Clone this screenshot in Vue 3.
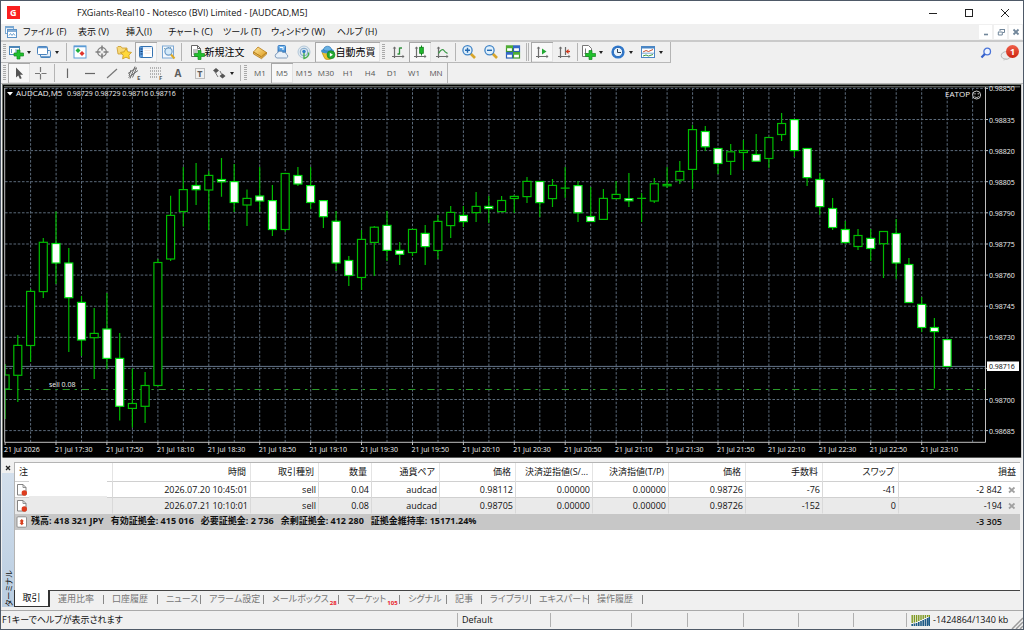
<script setup>
const menus = [
  { label: 'ファイル (F)', size: 'm' },
  { label: '表示 (V)', size: 's' },
  { label: '挿入(I)', size: 'xs' },
  { label: 'チャート (C)', size: 'm' },
  { label: 'ツール (T)', size: 's' },
  { label: 'ウィンドウ (W)', size: 'l' },
  { label: 'ヘルプ (H)', size: 'm' }
]

const mainTools = [
  { kind: 'grip' },
  { icon: 'new-chart', name: '新規チャート', drop: true },
  { icon: 'profiles', name: 'プロファイル', drop: true },
  { kind: 'sep' },
  { icon: 'market', name: '気配値表示' },
  { icon: 'target', name: 'データウィンドウ' },
  { icon: 'navigator', name: 'ナビゲーター' },
  { icon: 'terminal', name: 'ターミナル', on: true },
  { icon: 'tester', name: 'ストラテジーテスター' },
  { kind: 'sep' },
  { icon: 'order', name: '新規注文', text: '新規注文' },
  { icon: 'book', name: 'メタエディター' },
  { icon: 'cloud', name: '仮想ホスティング' },
  { icon: 'signal', name: 'シグナル' },
  { icon: 'auto', name: '自動売買', text: '自動売買', on: true },
  { kind: 'grip' },
  { icon: 'bars', name: 'バーチャート' },
  { icon: 'candles', name: 'ローソク足', on: true },
  { icon: 'line', name: 'ラインチャート' },
  { kind: 'sep' },
  { icon: 'zoom-in', name: '拡大' },
  { icon: 'zoom-out', name: '縮小' },
  { icon: 'tiles', name: '整列' },
  { kind: 'sep double' },
  { icon: 'scroll', name: '自動スクロール', on: true },
  { icon: 'shift', name: 'チャートシフト' },
  { kind: 'sep' },
  { icon: 'indicators', name: 'インディケータ', drop: true, roomy: true },
  { icon: 'clock', name: '時間足設定', drop: true, roomy: true },
  { icon: 'template', name: '定型チャート', drop: true, roomy: true }
]

const drawTools = [
  { kind: 'grip' },
  { icon: 'cursor', name: 'カーソル', on: true },
  { icon: 'cross', name: 'クロスヘア' },
  { kind: 'sep' },
  { icon: 'vline', name: '垂直線' },
  { icon: 'hline', name: '水平線' },
  { icon: 'trend', name: 'トレンドライン' },
  { icon: 'channel', name: 'チャネル', letter: 'E', x: 11, y: 15, size: 6 },
  { icon: 'fibo', name: 'フィボナッチ', letter: 'F', x: 11, y: 15, size: 6 },
  { icon: 'blank', name: 'テキスト', letter: 'A', x: 4.5, y: 12, size: 10 },
  { icon: 'label', name: 'ラベル', letter: 'T', x: 5.3, y: 12, size: 9 },
  { icon: 'arrows', name: '矢印', drop: true }
]

const frames = ['M1', 'M5', 'M15', 'M30', 'H1', 'H4', 'D1', 'W1', 'MN']

/* high, body top, body bottom, low, 1 = falling candle */
const raw = [
  [364, 375, 389, 419, 0], [335, 345.4, 375.3, 402, 0], [289, 291.4, 345.5, 362, 0], [238, 242.3, 291.6, 298, 0],
  [211.5, 243.5, 263, 284, 1], [248, 263, 297.7, 352, 1], [296, 302.4, 340, 356, 1], [308, 333.4, 337.7, 379, 0],
  [293, 329, 358.4, 369, 1], [333, 358.4, 406.3, 420.5, 1], [368.5, 403.5, 408.4, 427.5, 0], [372, 385.5, 406.3, 423, 0],
  [259, 262.5, 385.5, 386, 0], [195.7, 215.4, 259, 261, 0], [167, 189.6, 211.5, 226.5, 0], [163, 185.5, 189.7, 205, 1],
  [171, 175.4, 190, 230, 0], [158, 179.5, 181.8, 196.7, 1], [164, 181.6, 202.5, 212, 1], [189.5, 198.4, 205, 226, 0],
  [167, 196, 201, 212, 1], [185, 200.6, 229.5, 236, 1], [173, 173.5, 229.5, 232, 0], [167, 175.5, 184, 186, 1],
  [167, 185.6, 202.5, 209, 1], [200, 200.6, 216.7, 228, 1], [211, 221.3, 263, 271, 1], [256, 260.5, 275.5, 286, 1],
  [230, 239.4, 277.5, 290, 0], [226, 227.2, 242.4, 276, 0], [211, 225.4, 250.4, 261, 1], [242, 250.4, 254.3, 265, 1],
  [229, 229.4, 252.5, 256, 0], [225, 233.4, 246.6, 265, 1], [215, 221.4, 250.5, 259, 0], [206, 212.4, 225.6, 238, 0],
  [206, 215.4, 221.6, 227, 1], [192, 206.4, 212.6, 222, 0], [196, 206.4, 208.6, 223, 1], [196, 200.5, 211.6, 212, 0],
  [195, 196.4, 198.5, 213, 0], [177, 181.4, 196.6, 203, 0], [181, 181.5, 202.6, 217, 1], [179, 185.4, 198.6, 207, 0],
  [167, 188.2, 188.2, 198, 0], [181, 185.6, 212.8, 222, 1], [187, 216.5, 221.5, 222, 1], [189, 198.4, 219.4, 220, 0],
  [181, 194.4, 198.6, 199, 0], [173, 198.6, 200.8, 207, 1], [193, 198.4, 198.4, 222, 0], [178, 183.8, 201, 203, 0],
  [167, 184.4, 185.8, 188, 0], [161, 171.4, 180, 184, 0], [125, 129.6, 169.4, 189, 0], [126, 131.5, 146.8, 151, 1],
  [148, 148.5, 163.5, 174, 1], [144, 151.8, 161.4, 175, 0], [140, 150.5, 152.5, 170, 0], [134, 154.5, 161.2, 161, 1],
  [137, 137.5, 158.5, 168, 0], [113, 123.5, 134.5, 141, 0], [119, 119.6, 150.6, 157, 1], [148, 148.5, 177.6, 186, 1],
  [173, 179.5, 206.6, 215, 1], [198, 208.5, 227.5, 230, 1], [221, 229.5, 242.5, 244, 1], [229, 235.5, 246.5, 250, 0],
  [229, 238.4, 248.5, 261, 1], [231, 231.5, 243.7, 278, 0], [219, 233.5, 263, 279, 1], [258, 264.5, 302.5, 303, 1],
  [297, 304.4, 327.5, 332, 1], [318, 327.5, 331.6, 388.5, 1], [339, 339.6, 366.5, 367, 1]
]
const candles = raw.map(([high, top, bottom, low, down], i) => ({
  x: +(5.1 + 12.73 * i).toFixed(1), high, top, h: bottom - top, bottom, low, down
}))

const gridX = Array.from({ length: 38 }, (_, i) => +(30.6 + 25.46 * i).toFixed(1))
const prices = Array.from({ length: 12 }, (_, i) => ({
  y: +(88.4 + 31.11 * i).toFixed(1),
  label: (0.9885 - 0.00015 * i).toFixed(5)
}))
const times = Array.from({ length: 19 }, (_, i) => {
  const min = 17 * 60 + 10 + 20 * i
  const clock = Math.floor(min / 60) + ':' + String(min % 60).padStart(2, '0')
  return { x: +(5.1 + 50.92 * i).toFixed(1), label: '21 Jul ' + (i ? clock : '2026') }
})

const heads = ['注', '時間', '取引種別', '数量', '通貨ペア', '価格', '決済逆指値(S/...', '決済指値(T/P)', '価格', '手数料', 'スワップ', '損益']
const rows = [
  ['2026.07.20 10:45:01', 'sell', '0.04', 'audcad', '0.98112', '0.00000', '0.00000', '0.98726', '-76', '-41', '-2 842'],
  ['2026.07.21 10:10:01', 'sell', '0.08', 'audcad', '0.98705', '0.00000', '0.00000', '0.98726', '-152', '0', '-194']
]
const summary = ['残高: 418 321 JPY', '有効証拠金: 415 016', '必要証拠金: 2 736', '余剰証拠金: 412 280', '証拠金維持率: 15171.24%']

const tabs = [
  { t: '運用比率', w: 54 }, { t: '口座履歴', w: 54 }, { t: 'ニュース', w: 43 }, { t: 'アラーム設定', w: 63 },
  { t: 'メールボックス', n: '28', w: 75 }, { t: 'マーケット', n: '105', w: 61 }, { t: 'シグナル', w: 47 }, { t: '記事', w: 35 },
  { t: 'ライブラリ', w: 49 }, { t: 'エキスパート', w: 58 }, { t: '操作履歴', w: 54 }
]
</script>

<template>
  <div class="window">
    <svg class="defs" aria-hidden="true">
      <defs>
        <linearGradient id="gold" x1="0" y1="0" x2="1" y2="1"><stop offset="0" stop-color="#ffe9a0" /><stop offset="1" stop-color="#dd9a1c" /></linearGradient>
        <linearGradient id="sky" x1="0" y1="0" x2="0" y2="1"><stop offset="0" stop-color="#8cc8f6" /><stop offset="1" stop-color="#2474c4" /></linearGradient>
        <linearGradient id="ball" x1="0" y1="0" x2="0" y2="1"><stop offset="0" stop-color="#f0604a" /><stop offset="1" stop-color="#cc2410" /></linearGradient>
      </defs>
      <symbol id="new-chart" viewBox="0 0 16 16">
        <rect x="1.500" y="2.500" width="10" height="8" fill="#fff" stroke="#4d86b8" /><path d="M2 3.500h9" stroke="#4d86b8" /><path d="M3.500 5v4M8 5v4" stroke="#6b9dc8" />
        <path d="M9 6h3v3h3.500v3H12v3H9v-3H6V9h3z" fill="#20c02c" stroke="#128a1c" stroke-width=".7" />
      </symbol>
      <symbol id="profiles" viewBox="0 0 16 16">
        <rect x="4.500" y="6.500" width="10" height="7" rx="1" fill="#e7f1fb" stroke="#4a83bd" /><rect x="1.500" y="2.500" width="10" height="8" rx="1" fill="#fff" stroke="#4a83bd" /><path d="M2 3.500h9" stroke="#5b93cc" stroke-width="1.500" /><path d="M5 13h9" stroke="#4a83bd" stroke-width="1.500" />
      </symbol>
      <symbol id="market" viewBox="0 0 16 16">
        <rect x="2" y="2" width="12" height="12" fill="#fff" stroke="#5b9bd5" /><path d="M2 2.500h12" stroke="#5b9bd5" stroke-width="1.500" />
        <path d="M6 4l2.500 2.500L6 9 3.500 6.500z" fill="#20b040" /><path d="M10 7l2.500 2.500L10 12 7.500 9.500z" fill="#e0342a" />
      </symbol>
      <symbol id="target" viewBox="0 0 16 16">
        <circle cx="8" cy="8" r="4.300" fill="none" stroke="#808080" stroke-width="1.300" /><path d="M8 1.500v5M8 9.500v5M1.500 8h5M9.500 8h5" stroke="#808080" stroke-width="1.600" />
      </symbol>
      <symbol id="navigator" viewBox="0 0 16 16">
        <path d="M1 3.500l1-1h3l1 1.500h5V10H2z" fill="#f7d978" stroke="#c9992c" stroke-width=".8" /><path d="M10 4.500l1.800 3.300 3.700.6-2.600 2.700.5 3.700-3.400-1.600-3.400 1.600.6-3.700L4.500 8.400l3.700-.6z" fill="#ffd83a" stroke="#c9951a" stroke-width=".8" />
      </symbol>
      <symbol id="terminal" viewBox="0 0 16 16">
        <rect x="1.500" y="2.500" width="13" height="11" rx="1" fill="#fff" stroke="#3572b0" /><rect x="2" y="3" width="3" height="10" fill="#5c9ada" /><path d="M2.500 5h2M2.500 7.500h2M2.500 10h2" stroke="#173f74" /><path d="M5 4h9" stroke="#cfe1f5" /><path d="M6.500 6.500h6M6.500 9h6" stroke="#f3e6e0" />
      </symbol>
      <symbol id="tester" viewBox="0 0 16 16">
        <rect x="2.500" y="2" width="11" height="12" fill="#f4f8fd" stroke="#7aa7d4" /><path d="M4 4.500h2v6M8 3.500h4" stroke="#8aa" fill="none" stroke-dasharray="1 1" /><circle cx="8.500" cy="7.500" r="3.600" fill="#d4eafa" stroke="#6d9cc8" stroke-width="1.200" /><path d="M11 10.500l3.500 4" stroke="#dca928" stroke-width="2" />
      </symbol>
      <symbol id="order" viewBox="0 0 16 16">
        <path d="M2.500 1.500h6l3 3v8h-9z" fill="#fff" stroke="#666" /><path d="M8.500 1.500v3h3" fill="none" stroke="#666" /><path d="M4 6h5M4 8h4M4 10h3" stroke="#888" /><path d="M9 6.500h3v3h3.500v3H12v3H9v-3H5.500v-3H9z" fill="#20c02c" stroke="#128a1c" stroke-width=".7" />
      </symbol>
      <symbol id="book" viewBox="0 0 16 16">
        <path d="M6 3l8.500 5.500-5 4.500L1.500 8z" fill="url(#gold)" stroke="#b67a14" stroke-width=".8" /><path d="M1.500 8v2l8 4.700 5-4.500V8.500L9.500 13z" fill="#e9bb55" stroke="#a86f10" stroke-width=".7" />
      </symbol>
      <symbol id="cloud" viewBox="0 0 16 16">
        <rect x="4" y="1.500" width="7.500" height="8" rx="1" fill="url(#sky)" stroke="#1d66b4" stroke-width=".8" /><path d="M6 3.500h3v2.500" stroke="#fff" fill="none" /><path d="M3 14a2.300 2.300 0 010-4.500 3.500 3.500 0 016-1 2.500 2.500 0 013.500 1.800A2 2 0 0112.500 14z" fill="#e8f0f8" stroke="#6789ae" stroke-width=".8" />
      </symbol>
      <symbol id="signal" viewBox="0 0 16 16">
        <circle cx="8" cy="8" r="6" fill="#dfe9f1" stroke="#b3c7d8" /><circle cx="8" cy="8" r="3.800" fill="none" stroke="#7fa6c8" /><path d="M8 8v6.500c3-.5 5-3 4.500-6" stroke="#48b04c" stroke-width="1.400" fill="none" /><circle cx="8" cy="7.500" r="1.700" fill="#2f7ec4" />
      </symbol>
      <symbol id="auto" viewBox="0 0 16 16">
        <path d="M2 8.500h10V12a4 3 0 01-8 1z" fill="#efc12e" stroke="#b58c10" stroke-width=".7" /><ellipse cx="7.500" cy="7" rx="6.500" ry="2.500" fill="#4192cf" /><path d="M3.500 6c0-5 8-5 8 0-2 1.300-6 1.300-8 0z" fill="#69b1e2" stroke="#2a76b4" stroke-width=".7" /><circle cx="11" cy="10.800" r="4" fill="#24a832" stroke="#15801f" stroke-width=".6" /><path d="M9.800 8.800l3.200 2-3.200 2z" fill="#fff" />
      </symbol>
      <symbol id="axes" viewBox="0 0 16 16">
        <path d="M4.500 3v11M2 12.500h12" stroke="#6c6c6c" stroke-width="1.200" fill="none" /><path d="M2.700 4.500l1.800-2 1.800 2zM12.500 10.700l2 1.800-2 1.800z" fill="#6c6c6c" />
      </symbol>
      <symbol id="bars" viewBox="0 0 16 16"><use href="#axes" /><path d="M9.500 3.500v7M9.500 4H12M7.500 10h2" stroke="#2f8f3c" stroke-width="1.300" fill="none" /></symbol>
      <symbol id="candles" viewBox="0 0 16 16"><use href="#axes" /><path d="M9.500 1.500v10" stroke="#128a1c" /><rect x="7.700" y="3.300" width="3.600" height="6" fill="#1fb82c" stroke="#0d7c18" stroke-width=".8" /></symbol>
      <symbol id="line" viewBox="0 0 16 16"><use href="#axes" /><path d="M4.500 9.500C7 5 9 5 10 6.500s2 2 3.500 3" stroke="#3a9a46" stroke-width="1.200" fill="none" /></symbol>
      <symbol id="zoom-in" viewBox="0 0 16 16"><path d="M9.500 9.500l4.500 4.500" stroke="#d8a62c" stroke-width="2.600" /><circle cx="6.500" cy="6.200" r="4.600" fill="#dff0fc" stroke="#3f83c6" stroke-width="1.300" /><path d="M6.500 3.800v5M4 6.300h5" stroke="#2468b0" stroke-width="1.400" /></symbol>
      <symbol id="zoom-out" viewBox="0 0 16 16"><path d="M9.500 9.500l4.500 4.500" stroke="#d8a62c" stroke-width="2.600" /><circle cx="6.500" cy="6.200" r="4.600" fill="#dff0fc" stroke="#3f83c6" stroke-width="1.300" /><path d="M4 6.300h5" stroke="#2468b0" stroke-width="1.400" /></symbol>
      <symbol id="tiles" viewBox="0 0 16 16"><g stroke-width="1.200"><rect x="1.500" y="2" width="6" height="5.500" fill="#fff" stroke="#3f9a2b" /><rect x="8.500" y="2" width="6" height="5.500" fill="#fff" stroke="#2c5fb4" /><rect x="1.500" y="8.500" width="6" height="5.500" fill="#fff" stroke="#2c5fb4" /><rect x="8.500" y="8.500" width="6" height="5.500" fill="#fff" stroke="#3f9a2b" /></g><g stroke-width="2.400"><path d="M1 3h7M8 9.500h7" stroke="#4fae34" /><path d="M8 3h7M1 9.500h7" stroke="#3568c8" /></g></symbol>
      <symbol id="scroll" viewBox="0 0 16 16"><use href="#axes" /><path d="M8 4.500l4.500 3L8 10.500z" fill="#22a832" /></symbol>
      <symbol id="shift" viewBox="0 0 16 16"><use href="#axes" /><path d="M9.500 3v8" stroke="#6c6c6c" stroke-width="1.200" /><path d="M14 7.500h-3" stroke="#cf3b1e" stroke-width="1.300" /><path d="M12.500 5l-3 2.500 3 2.500z" fill="#cf3b1e" /></symbol>
      <symbol id="indicators" viewBox="0 0 16 16">
        <path d="M2.500 1.500h6l3 3v8h-9z" fill="#fff" stroke="#777" /><path d="M5.500 4.500v5M4.500 9.500h3" stroke="#777" fill="none" /><path d="M9 6.500h3v3h3.500v3H12v3H9v-3H5.500v-3H9z" fill="#20c02c" stroke="#128a1c" stroke-width=".7" />
      </symbol>
      <symbol id="clock" viewBox="0 0 16 16"><circle cx="8" cy="8" r="6.600" fill="#2f78cc" /><circle cx="8" cy="8" r="4.600" fill="#e9f4fd" stroke="#1d5dac" stroke-width=".8" /><path d="M7.500 5v3.500H11" stroke="#345" fill="none" /></symbol>
      <symbol id="template" viewBox="0 0 16 16"><rect x="1.500" y="2.500" width="13" height="11" fill="#fff" stroke="#4a86c4" /><path d="M2 3.500h12" stroke="#4a86c4" stroke-width="2" /><path d="M3 8l3-1.500 2.500 1L13 5.500" stroke="#c8502e" fill="none" /><path d="M2 9.200h12" stroke="#7aa7d4" /><path d="M3 12l3-1 2.500 1 4.500-1.500" stroke="#3a9a46" fill="none" /></symbol>
      <symbol id="cursor" viewBox="0 0 16 16"><path d="M5 2.500v10l2.300-2.100 1.600 3.600 1.800-.8-1.600-3.500h3z" fill="#555" /></symbol>
      <symbol id="cross" viewBox="0 0 16 16"><path d="M7.500 2v5M7.500 9v5.500M2 8.500h5M8.500 8.500h5" stroke="#777" stroke-width="1.200" /></symbol>
      <symbol id="vline" viewBox="0 0 16 16"><path d="M7.500 3.500v9.500" stroke="#666" stroke-width="1.200" /></symbol>
      <symbol id="hline" viewBox="0 0 16 16"><path d="M3 8.500h10" stroke="#666" stroke-width="1.200" /></symbol>
      <symbol id="trend" viewBox="0 0 16 16"><path d="M3 13L13 4" stroke="#777" stroke-width="1.200" /></symbol>
      <symbol id="channel" viewBox="0 0 16 16"><path d="M2 8.500l8.500-6M2.500 12.500L12 5.500M4 13.500l5-12M6.500 12.500l4-9.500M3 11l2-6" stroke="#6c6c6c" fill="none" /></symbol>
      <symbol id="fibo" viewBox="0 0 16 16"><path d="M2 3h12M2 6h12M2 9h12M2 12h8" stroke="#777" stroke-dasharray="1 1" fill="none" /></symbol>
      <symbol id="blank" viewBox="0 0 16 16"></symbol>
      <symbol id="label" viewBox="0 0 16 16"><rect x="3.500" y="3.500" width="9" height="10" fill="none" stroke="#888" stroke-dasharray="1 1" /></symbol>
      <symbol id="arrows" viewBox="0 0 16 16"><path d="M2 5.500L5 3l3 2.500-3 2.500zM8.500 11l3-2.500 3 2.500-3 2.500z" fill="#555" /><path d="M4 7l3 5M9 6l1.500 3" stroke="#777" /></symbol>
      <symbol id="sheet" viewBox="0 0 12 12"><path d="M1.500.5h5.500l3 3V11H1.500z" fill="#fff" stroke="#777" stroke-width=".9" /><path d="M7 .5v3h3" fill="none" stroke="#777" stroke-width=".8" /><circle cx="8.300" cy="9" r="2.700" fill="#dd3c1e" /></symbol>
      <symbol id="balance" viewBox="0 0 12 12"><rect x="1" y=".8" width="9.500" height="10.400" rx="1" fill="#fff" stroke="#888" stroke-width=".9" /><path d="M5.800 3L8 5.300H7V7h1L5.800 9.300 3.500 7h1V5.300h-1z" fill="#d8401e" /></symbol>
    </svg>

    <header class="title">
      <svg class="logo" viewBox="0 0 13 13"><rect width="13" height="13" fill="#fb1f1f" /><text x="3" y="10" font-size="9" font-weight="700" fill="#fff">G</text></svg>
      <h1>FXGiants-Real10 - Notesco (BVI) Limited - [AUDCAD,M5]</h1>
      <div class="sys">
        <button aria-label="最小化"><svg viewBox="0 0 10 10"><path d="M1 5.500h8" /></svg></button>
        <button aria-label="最大化"><svg viewBox="0 0 10 10"><rect x="1.500" y="1.500" width="7" height="7" /></svg></button>
        <button aria-label="閉じる"><svg viewBox="0 0 10 10"><path d="M1 1l8 8M9 1L1 9" /></svg></button>
      </div>
    </header>

    <nav class="menu">
      <svg class="doc" viewBox="0 0 12 12"><rect x=".5" y=".5" width="8" height="7" fill="#fff" stroke="#7ba8d2" /><path d="M1 1.500h7" stroke="#7ba8d2" stroke-width="1.500" /><rect x="2.500" y="3.500" width="9" height="8" fill="#fff" stroke="#5d93c8" /><path d="M3 5h8" stroke="#5d93c8" stroke-width="1.500" /><path d="M4 9.500l1.500-2 1.500 2L8.500 7.500l1.500 2" fill="none" stroke="#6e9fce" /></svg>
      <button v-for="m in menus" :key="m.label" :class="m.size">{{ m.label }}</button>
      <div class="mdi">
        <button aria-label="チャートを最小化"><svg viewBox="0 0 8 8"><path d="M2 6.500h4" stroke-width="1.600" /></svg></button>
        <button aria-label="チャートを元に戻す"><svg viewBox="0 0 8 8"><path d="M3 1.500h4.500M3 1v2M7.500 1v3.500H6M1 4h4.500M1.300 4v3h4V4" /></svg></button>
        <button aria-label="チャートを閉じる"><svg viewBox="0 0 8 8"><path d="M1.500 1.500l5 5M6.500 1.500l-5 5" stroke-width="1.800" /></svg></button>
      </div>
    </nav>

    <div class="bars">
      <div class="bar main">
        <template v-for="(t, i) in mainTools" :key="i">
          <i v-if="t.kind" :class="t.kind"></i>
          <button v-else :class="{ on: t.on, drop: t.drop, roomy: t.roomy, wide: t.text }" :aria-label="t.name">
            <svg class="ic"><use :href="'#' + t.icon" /></svg><span v-if="t.text">{{ t.text }}</span><b v-if="t.drop" class="caret"></b>
          </button>
        </template>
      </div>
      <div class="bar">
        <template v-for="(t, i) in drawTools" :key="i">
          <i v-if="t.kind" :class="t.kind"></i>
          <button v-else :class="{ on: t.on, drop: t.drop }" :aria-label="t.name">
            <svg class="ic" viewBox="0 0 16 16"><use :href="'#' + t.icon" /><text v-if="t.letter" :x="t.x" :y="t.y" :font-size="t.size">{{ t.letter }}</text></svg><b v-if="t.drop" class="caret"></b>
          </button>
        </template>
        <i class="grip tall"></i>
        <button v-for="f in frames" :key="f" class="tf" :class="{ on: f === 'M5' }">{{ f }}</button>
      </div>
      <div class="extras">
        <button aria-label="検索"><svg viewBox="0 0 12 12"><circle cx="7.200" cy="4.500" r="3.300" fill="#eef4ff" stroke="#4a74d8" stroke-width="1.300" /><path d="M4.800 7L1.500 10.500" stroke="#3560cc" stroke-width="2.200" /></svg></button>
        <button class="bell" aria-label="通知 1件"><svg viewBox="0 0 20 18"><ellipse cx="6" cy="11.500" rx="4.800" ry="3.800" fill="#ececec" stroke="#aaa" stroke-width=".8" /><path d="M4 14l-.5 3 3.500-2.500z" fill="#ccc" /><circle cx="12.500" cy="7.500" r="6.500" fill="url(#ball)" /><text x="12.500" y="11" text-anchor="middle" font-size="9" font-weight="700" fill="#fff">1</text></svg></button>
      </div>
    </div>

    <svg class="chart" viewBox="1 84 1022 374" role="img" aria-label="AUDCAD M5">
      <rect x="1" y="84" width="1022" height="374" fill="#f0f0f0" />
      <rect x="2" y="84" width="1020" height="373.500" fill="#707670" />
      <rect x="3" y="85" width="1018" height="372.500" fill="#000" />
      <path d="M4 86.800H1020" stroke="#858a85" />
      <g stroke="#5c6b7b" stroke-dasharray="2.600 1.640" fill="none">
        <path v-for="x in gridX" :key="x" :d="`M${x} 88V442`" />
        <path v-for="p in prices" :key="p.y" :d="`M5 ${p.y}H985`" />
      </g>
      <path d="M5 366.400H985" stroke="#64758a" />
      <path d="M5 389.500H985" stroke="#2a9a2a" stroke-dasharray="7.200 4.800 2.400 4.800" />
      <clipPath id="plot"><rect x="4.500" y="86" width="981" height="356" /></clipPath>
      <g clip-path="url(#plot)" stroke-width="1.200">
        <g v-for="c in candles" :key="c.x" :stroke="c.down ? '#00e010' : '#00bc00'">
          <path :d="`M${c.x} ${c.high}V${c.top}M${c.x} ${c.bottom}V${c.low}`" stroke="#00b800" />
          <rect v-if="c.h > 0" :x="c.x - 4" :y="c.top" width="8" :height="c.h" :fill="c.down ? '#fff' : '#000'" />
          <path v-else :d="`M${c.x - 4.500} ${c.top}h9`" />
        </g>
      </g>
      <path d="M4.700 88V442.300H985.500V87" fill="none" stroke="#c0c0c0" />
      <g class="tick">
        <path v-for="t in times" :key="t.x" :d="`M${t.x} 442v3`" stroke="#c0c0c0" />
        <path v-for="p in prices" :key="p.y" :d="`M985 ${p.y}h3`" stroke="#c0c0c0" />
        <text v-for="t in times" :key="t.label" :x="t.x - 1" y="452">{{ t.label }}</text>
        <text v-for="p in prices" :key="p.label" x="989" :y="p.y + 3">{{ p.label }}</text>
        <rect x="987" y="361.500" width="32" height="9.500" fill="#fff" />
        <text x="989" y="369" class="now">0.98716</text>
        <path d="M7 92h6l-3 3.500z" fill="#fff" />
        <text x="16" y="96" class="big">AUDCAD,M5</text>
        <text x="67" y="96">0.98729 0.98729 0.98716 0.98716</text>
        <text x="49" y="387">sell 0.08</text>
        <text x="970" y="97" text-anchor="end" class="big">EATOP</text>
        <circle cx="976.600" cy="95" r="4" fill="none" stroke="#ddd" stroke-width=".9" />
        <path d="M974.500 96.300c1 1.600 3.200 1.600 4.200 0M975 93v1.500M978.200 93v1.500" fill="none" stroke="#ddd" stroke-width=".9" />
      </g>
      <path d="M1021.500 84V458" stroke="#c8c8c8" />
    </svg>

    <section class="term">
      <aside class="side">
        <button aria-label="ターミナルを閉じる"><svg viewBox="0 0 6 6"><path d="M1 1l4 4M5 1L1 5" stroke="#222" stroke-width="1.300" /></svg></button>
        <div class="strip"><span>ターミナル</span></div>
      </aside>
      <div class="panel">
        <div class="sheet">
          <table>
            <colgroup><col v-for="(h, i) in heads" :key="i" :class="'c' + i"></colgroup>
            <thead><tr><th v-for="(h, i) in heads" :key="i" scope="col">{{ h }}</th></tr></thead>
            <tbody>
              <tr v-for="(r, n) in rows" :key="n" :class="{ alt: n === 1 }">
                <td class="first"><svg class="mini"><use href="#sheet" /></svg><span class="blank"></span></td>
                <td v-for="(v, i) in r" :key="i">{{ v }}<button v-if="i === 10" class="close" aria-label="決済"><svg viewBox="0 0 8 8"><path d="M1 1.500l5.500 5M6.500 1.500L1 6.500" stroke="#a0a0a0" stroke-width="1.700" /></svg></button></td>
              </tr>
              <tr class="sum">
                <td colspan="11" class="first"><svg class="mini"><use href="#balance" /></svg><span v-for="s in summary" :key="s" class="seg">{{ s }}</span></td>
                <td class="total">-3 305</td>
              </tr>
            </tbody>
          </table>
        </div>
        <div class="tabs" role="tablist">
          <button class="active" role="tab" aria-selected="true">取引</button>
          <button v-for="t in tabs" :key="t.t" role="tab" :style="{ width: t.w + 'px' }">{{ t.t }}<sub v-if="t.n">{{ t.n }}</sub></button>
        </div>
      </div>
    </section>

    <footer class="status">
      <span class="help">F1キーでヘルプが表示されます</span>
      <span class="s93">Default</span>
      <span class="s81"></span><span class="s56"></span><span class="s56"></span><span class="s55"></span><span class="s55"></span><span class="s53"></span>
      <span class="net">
        <svg viewBox="0 0 19 11"><path d="M1.200 0v8M3.400 0v7.500M5.600 0v7M7.800 0v6M10 0v5M12.200 0v4M14.400 0v3M16.600 0v2M18.400 0v2" stroke="#7f9a20" stroke-width="1.400" /><path d="M1.200 9v2M3.400 8.500V11M5.600 8v3M7.800 7v4M10 6v5M12.200 5v6M14.400 4v7M16.600 3v8M18.400 2v9" stroke="#1c5a86" stroke-width="1.600" /></svg>
        -1424864/1340 kb
      </span>
      <svg class="sizer" viewBox="0 0 12 12"><path d="M12 1L1 12M12 5l-7 7M12 9l-3 3" stroke="#9a9a9a" stroke-width="1.500" /></svg>
    </footer>
  </div>
</template>

<style>
body {
  margin: 0;
  background: #f0f0f0;
}
</style>

<style scoped>
.window {
  box-sizing: border-box;
  min-height: 100vh;
  display: flex;
  flex-direction: column;
  border: 1px solid #4e5967;
  background: #f0f0f0;
  color: #111;
  font: 9px/12px "Open Sans", "Noto Sans CJK JP", sans-serif;
  font-feature-settings: "palt";
}
.defs { position: absolute; width: 0; height: 0; }
button {
  box-sizing: border-box;
  margin: 0;
  padding: 0;
  border: 0;
  background: none;
  color: inherit;
  font: inherit;
  font-feature-settings: inherit;
  white-space: nowrap;
}
svg { display: block; flex: none; }

.title { display: flex; align-items: center; height: 23px; background: #fff; }
.logo { width: 13px; height: 13px; margin-left: 6px; }
h1 { flex: 1; margin: 0 0 0 57px; font: inherit; }
.sys { display: flex; }
.sys button { width: 36px; height: 23px; display: grid; place-items: center; }
.sys svg { width: 10px; height: 10px; fill: none; stroke: #222; }

.menu { display: flex; align-items: center; height: 16px; border-bottom: 2px solid #cacaca; }
.doc { width: 12px; height: 12px; margin: 0 6px 0 4px; }
.menu > button { text-align: left; }
.m { width: 55px; }
.s { width: 48px; }
.xs { width: 42px; }
.l { width: 66px; }
.mdi { display: flex; gap: 2px; margin: 0 1px 0 auto; }
.mdi button { width: 13px; height: 14px; display: grid; place-items: center; background: #fff; }
.mdi svg { width: 8px; height: 8px; fill: none; stroke: #71869a; }

.bars { position: relative; border-bottom: 1px solid #b8b8b8; }
.bar { display: flex; align-items: stretch; width: max-content; height: 20px; border-right: 1px solid #b4b4b4; }
.main { border-bottom: 1px solid #b8b8b8; }
.bar button { width: 22px; display: flex; align-items: center; justify-content: center; }
.bar button.drop { width: 28px; justify-content: flex-start; gap: 3px; }
.bar button.roomy { width: 30px; }
.bar button.wide { width: 65px; font-size: 10px; color: #000; }
.bar button.on { background: #f8f8f8; box-shadow: inset 1px 1px #a8a8a8, inset -1px -1px #e2e2e2; }
.ic { width: 16px; height: 16px; }
.ic text { font-weight: 700; fill: #5c5c5c; }
.caret { border: 2px solid transparent; border-top: 3px solid #222; border-bottom: 0; }
.grip { width: 3px; margin: 2px 2px; background: repeating-linear-gradient(#a9a9a9 0 1px, #f0f0f0 1px 2px); }
.sep { width: 1px; margin: 1px 2px; background: #b4b4b4; }
.double { box-shadow: 2px 0 #b4b4b4; margin-right: 4px; }
.tall { box-shadow: -3px 0 #f0f0f0, -4px 0 #b4b4b4; margin-left: 5px; }
.bar .tf { color: #555; font-size: 8px; }
.extras { position: absolute; right: 3px; top: 2px; display: flex; align-items: flex-start; gap: 8px; }
.extras svg { width: 12px; height: 18px; }
.extras .bell svg { width: 20px; }

.chart { width: 100%; height: auto; }
.tick text { fill: #f2f2f2; font-size: 7px; white-space: pre; }
.tick .now { fill: #000; }
.tick .big { font-size: 8px; }

.term { flex: 1; display: flex; padding: 4px 3px 3px 1px; border-bottom: 1px solid #a9a9a9; }
.side { width: 12px; display: flex; flex-direction: column; }
.side button { height: 11px; display: grid; place-items: center; }
.side button svg { width: 6px; height: 6px; }
.strip { flex: 1; display: flex; align-items: flex-end; justify-content: center; background: linear-gradient(#d3dfec, #b9cde1); }
.strip span { writing-mode: vertical-rl; text-orientation: sideways; transform: rotate(180deg); font-size: 8px; line-height: 11px; }
.panel { flex: 1; display: flex; flex-direction: column; min-width: 0; }
.sheet { flex: 1; background: #fff; border: 1px solid #b4b4b4; border-width: 1px 0 0 1px; }
table { width: 100%; table-layout: fixed; border-collapse: separate; border-spacing: 0; }
th, td {
  box-sizing: border-box;
  height: 16px;
  padding: 0 2px 0 0;
  border-right: 1px solid #d9d9d9;
  border-bottom: 1px solid #d0d0d0;
  text-align: right;
  font-weight: 400;
  white-space: nowrap;
  line-height: 12px;
}
th { height: 19px; padding-right: 4px; border-right-color: #e4e4e4; }
th:first-child { text-align: left; padding-left: 4px; }
th:last-child, td:last-child { border-right: 0; }
.c0 { width: 98px; }
.c1 { width: 138px; }
.c2 { width: 68px; }
.c3 { width: 53px; }
.c4 { width: 68px; }
.c5, .c7, .c10 { width: 76px; }
.c6, .c8, .c9 { width: 77px; }
.alt td { background: #eaeaea; border-bottom-color: #eaeaea; }
.first { position: relative; text-align: left; }
.mini { display: inline-block; width: 12px; height: 12px; margin: 0 3px 0 1px; vertical-align: middle; }
.blank { position: absolute; left: 14px; top: -1px; width: 78px; height: 15px; background: #fff; }
.alt .blank { top: -2px; background: #eaeaea; }
.close { width: 8px; height: 8px; margin: 0 2px 0 6px; vertical-align: middle; }
.sum td { background: #c7c7c7; border-color: #c7c7c7; font-weight: 700; }
.seg { margin-right: 7px; }
.sum .total { padding-right: 18px; font-weight: 600; }

.tabs { display: flex; height: 16px; border-top: 1px solid #444; color: #777; }
.tabs button { border: 0; text-align: left; padding-left: 8px; position: relative; }
.tabs button:not(.active)::after { content: ""; position: absolute; right: 0; top: 4px; width: 1px; height: 9px; background: #888; }
.tabs .active { width: 36px; padding: 0; text-align: center; margin-top: -1px; background: #fff; border: solid #333; border-width: 0 2px 1px 1px; color: #000; }
sub { color: #e8222c; font-size: 6px; font-weight: 700; line-height: 0; margin-left: 1px; }

.status { display: flex; align-items: center; height: 18px; position: relative; }
.status span { box-sizing: border-box; height: 14px; line-height: 14px; padding-left: 4px; border-left: 1px solid #b0b0b0; white-space: nowrap; }
.status .help { flex: 1; padding-left: 1px; border: 0; }
.s93 { width: 93px; }
.s81 { width: 81px; }
.s56 { width: 56px; }
.s55 { width: 55px; }
.s53 { width: 53px; }
.status .net { width: 117px; display: flex; align-items: center; gap: 3px; }
.net svg { width: 19px; height: 11px; }
.sizer { position: absolute; right: 0; bottom: 0; width: 12px; height: 12px; }
</style>
